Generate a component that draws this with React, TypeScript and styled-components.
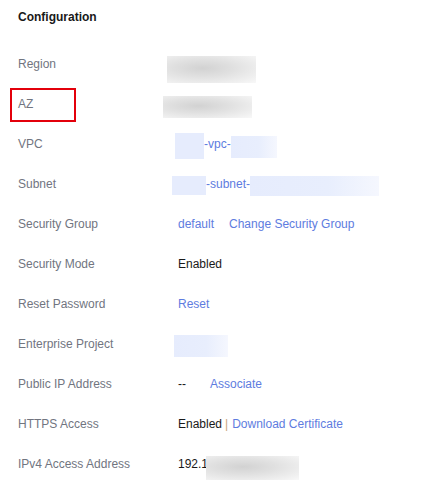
import React from "react";
import styled, { createGlobalStyle } from "styled-components";

const Global = createGlobalStyle`
  html, body { margin: 0; padding: 0; background: #ffffff; }
  body { font-family: "Liberation Sans", Arial, sans-serif; font-size: 12px; }
`;

const Panel = styled.section`
  width: 426px;
  padding: 9px 0 0 0;
  box-sizing: border-box;
`;

const Title = styled.h2`
  margin: 0 0 19px 18px;
  font-size: 12px;
  line-height: 16px;
  font-weight: 700;
  color: #191919;
`;

const List = styled.dl`
  margin: 0;
  display: flex;
  flex-direction: column;
`;

const Row = styled.div`
  display: grid;
  grid-template-columns: 160px 1fr;
  height: 40px;
  align-items: center;
  padding-left: 18px;
`;

const Label = styled.dt<{ $boxed?: boolean }>`
  position: relative;
  color: #71757f;
  line-height: 16px;
  &::after {
    content: "";
    display: ${(p) => (p.$boxed ? "block" : "none")};
    position: absolute;
    left: -8px;
    top: -8px;
    width: 62px;
    height: 30px;
    border: 2px solid #e3000b;
  }
`;

const Value = styled.dd`
  margin: 0;
  display: flex;
  align-items: center;
  color: #191919;
  line-height: 16px;
  white-space: nowrap;
`;

const Link = styled.a<{ $gap?: number }>`
  color: #5e7ce0;
  text-decoration: none;
  cursor: pointer;
  margin-left: ${(p) => p.$gap ?? 0}px;
`;

const Pipe = styled.span`
  color: #c9a47c;
  margin: 0 4px 0 3px;
`;

const Mask = styled.span<{
  $w: number;
  $h: number;
  $dx: number;
  $dy: number;
  $tone: "gray" | "blue" | "blueSolid";
}>`
  display: inline-block;
  flex: none;
  width: ${(p) => p.$w}px;
  height: ${(p) => p.$h}px;
  margin-left: ${(p) => p.$dx}px;
  transform: translateY(${(p) => p.$dy}px);
  background: ${(p) =>
    p.$tone === "gray"
      ? "radial-gradient(ellipse at 40% 45%, #d2d2d2 0%, #e0e0e0 40%, #f0f0f0 80%, #f8f8f8 100%)"
      : p.$tone === "blue"
      ? "linear-gradient(90deg, #e6ecfd 0%, #e8eefd 60%, #f5f7fe 100%)"
      : "#e6ecfd"};
  position: relative;
  z-index: 1;
`;

const Plain = styled.span`
  color: #191919;
`;

export default function App() {
  return (
    <>
      <Global />
      <Panel>
        <Title>Configuration</Title>
        <List>
          <Row>
            <Label>Region</Label>
            <Value>
              <Mask $tone="gray" $w={89} $h={27} $dx={-11} $dy={5} />
            </Value>
          </Row>
          <Row>
            <Label $boxed>AZ</Label>
            <Value>
              <Mask $tone="gray" $w={89} $h={22} $dx={-15} $dy={3} />
            </Value>
          </Row>
          <Row>
            <Label>VPC</Label>
            <Value>
              <Mask $tone="blueSolid" $w={29} $h={26} $dx={-3} $dy={2} />
              <Link>-vpc-</Link>
              <Mask $tone="blue" $w={46} $h={22} $dx={0} $dy={3} />
            </Value>
          </Row>
          <Row>
            <Label>Subnet</Label>
            <Value>
              <Mask $tone="blueSolid" $w={34} $h={19} $dx={-6} $dy={1} />
              <Link>-subnet-</Link>
              <Mask $tone="blue" $w={129} $h={20} $dx={0} $dy={2} />
            </Value>
          </Row>
          <Row>
            <Label>Security Group</Label>
            <Value>
              <Link>default</Link>
              <Link $gap={15}>Change Security Group</Link>
            </Value>
          </Row>
          <Row>
            <Label>Security Mode</Label>
            <Value>Enabled</Value>
          </Row>
          <Row>
            <Label>Reset Password</Label>
            <Value>
              <Link>Reset</Link>
            </Value>
          </Row>
          <Row>
            <Label>Enterprise Project</Label>
            <Value>
              <Mask $tone="blue" $w={54} $h={22} $dx={-4} $dy={2} />
            </Value>
          </Row>
          <Row>
            <Label>Public IP Address</Label>
            <Value>
              <Plain>--</Plain>
              <Link $gap={24}>Associate</Link>
            </Value>
          </Row>
          <Row>
            <Label>HTTPS Access</Label>
            <Value>
              <Plain>Enabled</Plain>
              <Pipe>|</Pipe>
              <Link>Download Certificate</Link>
            </Value>
          </Row>
          <Row>
            <Label>IPv4 Access Address</Label>
            <Value>
              <Plain>192.1</Plain>
              <Mask $tone="gray" $w={93} $h={24} $dx={-2} $dy={4} />
            </Value>
          </Row>
        </List>
      </Panel>
    </>
  );
}
